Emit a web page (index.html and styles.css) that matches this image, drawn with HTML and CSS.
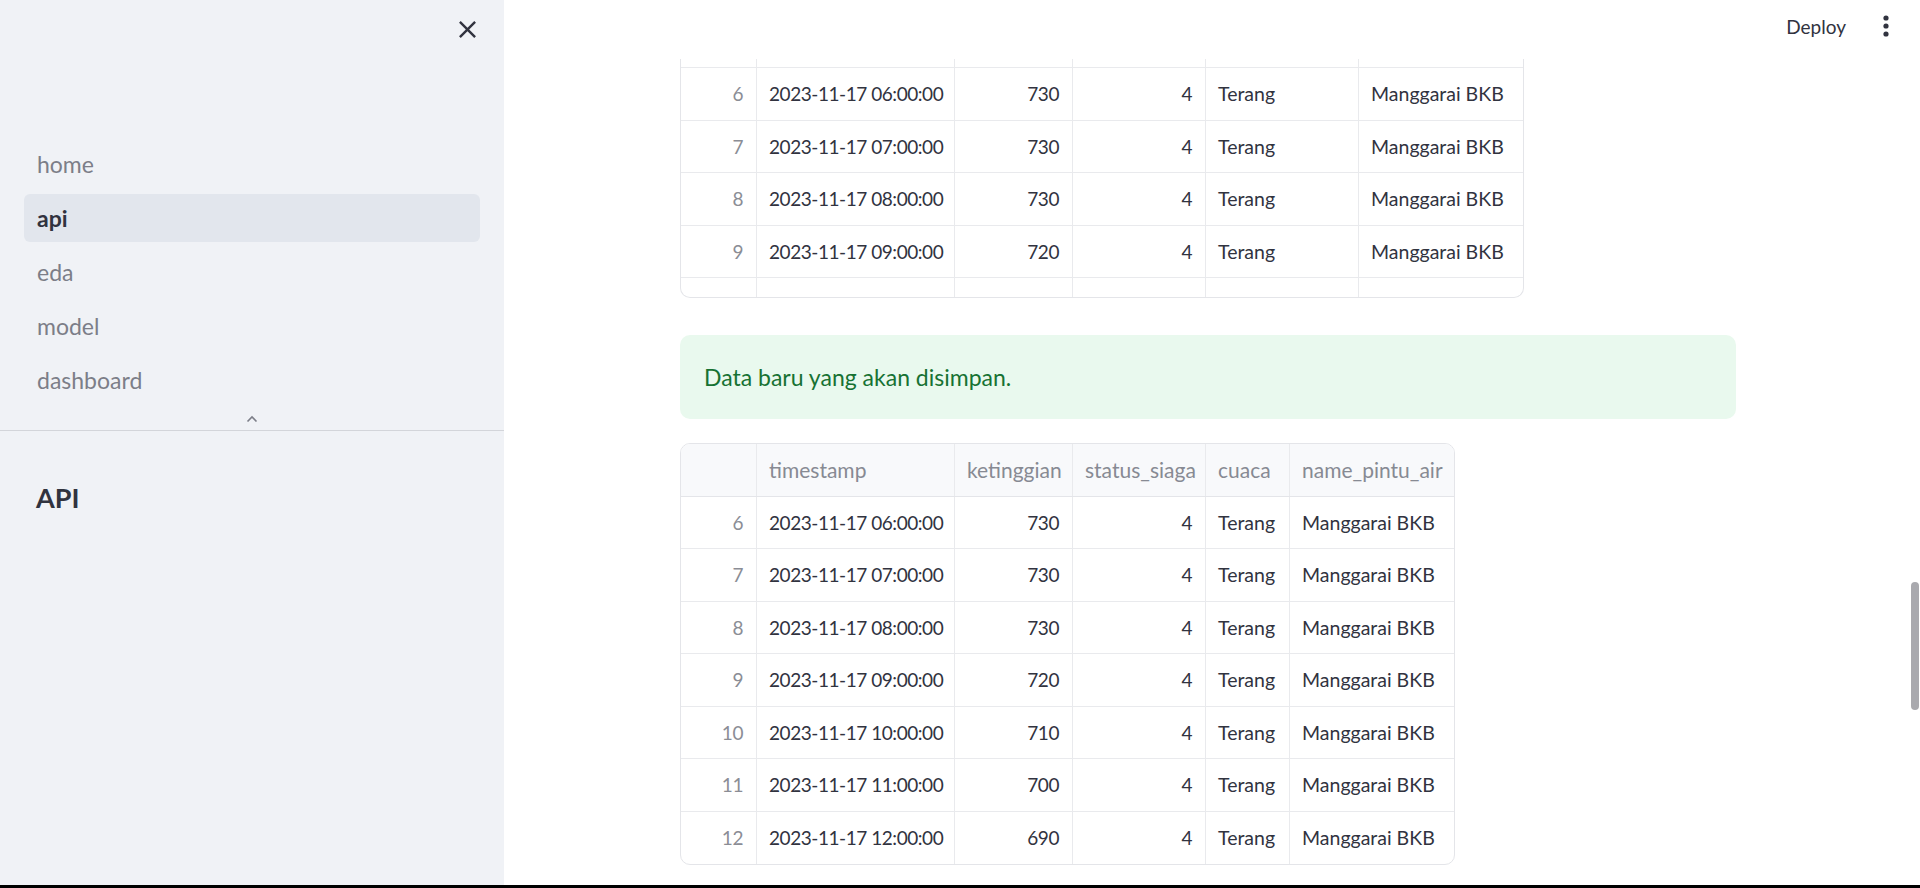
FILE: index.html
```html
<!DOCTYPE html>
<html lang="id">
<head>
<meta charset="utf-8">
<title>api</title>
<link rel="stylesheet" href="styles.css">
</head>
<body>
<div class="app">
  <aside class="sidebar">
    <div class="sb-header">
      <button class="icon-btn" aria-label="Close sidebar">
        <svg width="29" height="29" viewBox="0 0 24 24"><path d="M19 6.41L17.59 5 12 10.59 6.41 5 5 6.41 10.59 12 5 17.59 6.41 19 12 13.41 17.59 19 19 17.59 13.41 12z" fill="#31333f"/></svg>
      </button>
    </div>
    <nav class="nav">
      <a class="nav-item">home</a>
      <a class="nav-item active">api</a>
      <a class="nav-item">eda</a>
      <a class="nav-item">model</a>
      <a class="nav-item">dashboard</a>
    </nav>
    <div class="nav-toggle">
      <svg width="12" height="8" viewBox="0 0 12 8"><polyline points="1.5,6.5 6,2 10.5,6.5" fill="none" stroke="#7c7e88" stroke-width="1.6"/></svg>
    </div>
    <div class="sb-content">
      <h2 class="sb-title">API</h2>
    </div>
  </aside>

  <main class="main">
    <header class="topbar">
      <span class="deploy">Deploy</span>
      <span class="kebab">
        <svg width="6" height="22" viewBox="0 0 6 22"><circle cx="3" cy="3" r="2.6" fill="#31333f"/><circle cx="3" cy="11" r="2.6" fill="#31333f"/><circle cx="3" cy="19" r="2.6" fill="#31333f"/></svg>
      </span>
    </header>

    <section class="block">
      <div class="df df-scrolled t1">
        <div class="df-inner">
          <div class="row"><div class="c idx"></div><div class="c ts"></div><div class="c num"></div><div class="c num"></div><div class="c"></div><div class="c"></div></div>
          <div class="row"><div class="c idx">6</div><div class="c ts">2023-11-17 06:00:00</div><div class="c num">730</div><div class="c num">4</div><div class="c">Terang</div><div class="c">Manggarai BKB</div></div>
          <div class="row"><div class="c idx">7</div><div class="c ts">2023-11-17 07:00:00</div><div class="c num">730</div><div class="c num">4</div><div class="c">Terang</div><div class="c">Manggarai BKB</div></div>
          <div class="row"><div class="c idx">8</div><div class="c ts">2023-11-17 08:00:00</div><div class="c num">730</div><div class="c num">4</div><div class="c">Terang</div><div class="c">Manggarai BKB</div></div>
          <div class="row"><div class="c idx">9</div><div class="c ts">2023-11-17 09:00:00</div><div class="c num">720</div><div class="c num">4</div><div class="c">Terang</div><div class="c">Manggarai BKB</div></div>
          <div class="row"><div class="c idx">10</div><div class="c ts">2023-11-17 10:00:00</div><div class="c num">710</div><div class="c num">4</div><div class="c">Terang</div><div class="c">Manggarai BKB</div></div>
        </div>
      </div>

      <div class="alert">Data baru yang akan disimpan.</div>

      <div class="df df-full t2">
        <div class="row head"><div class="c"></div><div class="c">timestamp</div><div class="c">ketinggian</div><div class="c">status_siaga</div><div class="c">cuaca</div><div class="c">name_pintu_air</div></div>
        <div class="row"><div class="c idx">6</div><div class="c ts">2023-11-17 06:00:00</div><div class="c num">730</div><div class="c num">4</div><div class="c">Terang</div><div class="c">Manggarai BKB</div></div>
        <div class="row"><div class="c idx">7</div><div class="c ts">2023-11-17 07:00:00</div><div class="c num">730</div><div class="c num">4</div><div class="c">Terang</div><div class="c">Manggarai BKB</div></div>
        <div class="row"><div class="c idx">8</div><div class="c ts">2023-11-17 08:00:00</div><div class="c num">730</div><div class="c num">4</div><div class="c">Terang</div><div class="c">Manggarai BKB</div></div>
        <div class="row"><div class="c idx">9</div><div class="c ts">2023-11-17 09:00:00</div><div class="c num">720</div><div class="c num">4</div><div class="c">Terang</div><div class="c">Manggarai BKB</div></div>
        <div class="row"><div class="c idx">10</div><div class="c ts">2023-11-17 10:00:00</div><div class="c num">710</div><div class="c num">4</div><div class="c">Terang</div><div class="c">Manggarai BKB</div></div>
        <div class="row"><div class="c idx">11</div><div class="c ts">2023-11-17 11:00:00</div><div class="c num">700</div><div class="c num">4</div><div class="c">Terang</div><div class="c">Manggarai BKB</div></div>
        <div class="row last"><div class="c idx">12</div><div class="c ts">2023-11-17 12:00:00</div><div class="c num">690</div><div class="c num">4</div><div class="c">Terang</div><div class="c">Manggarai BKB</div></div>
      </div>
    </section>

    <div class="scroll-thumb"></div>
  </main>
</div>
<div class="taskbar"></div>
</body>
</html>
```

FILE: styles.css
```css
* { box-sizing: border-box; }

html, body {
  margin: 0;
  padding: 0;
  width: 1920px;
  height: 888px;
  overflow: hidden;
  background: #ffffff;
  font-family: Lato, "Noto Sans", sans-serif;
  color: #31333f;
}

.app {
  display: grid;
  grid-template-columns: 504px 1fr;
  height: 885px;
}

.taskbar {
  height: 3px;
  background: #000000;
}

/* ---------- Sidebar ---------- */
.sidebar {
  background: #f0f2f6;
  display: flex;
  flex-direction: column;
}

.sb-header {
  height: 58px;
  display: flex;
  justify-content: flex-end;
  align-items: center;
  padding-right: 22px;
}

.icon-btn {
  border: 0;
  background: transparent;
  padding: 0;
  display: flex;
  cursor: pointer;
}

.nav {
  margin-top: 82px;
  padding: 0 24px;
  display: flex;
  flex-direction: column;
  gap: 6px;
}

.nav-item {
  height: 48px;
  display: flex;
  align-items: center;
  padding-left: 13px;
  border-radius: 6px;
  font-size: 23px;
  color: #7c7e88;
}

.nav-item.active {
  background: #e2e6ed;
  color: #31333f;
  font-weight: 700;
}

.nav-toggle {
  height: 27px;
  display: flex;
  justify-content: center;
  align-items: flex-start;
  padding-top: 11px;
  border-bottom: 1px solid #d3d5da;
}

.sb-content {
  padding: 51px 36px 0;
}

.sb-title {
  margin: 0;
  font-size: 27px;
  line-height: 1.2;
  font-weight: 700;
  color: #31333f;
}

/* ---------- Main ---------- */
.main {
  position: relative;
  background: #ffffff;
  overflow: hidden;
}

.topbar {
  height: 59px;
  display: flex;
  justify-content: flex-end;
  align-items: center;
  gap: 37px;
  padding: 0 31px 7px 0;
}

.deploy {
  font-size: 19px;
  color: #31333f;
}

.kebab {
  display: flex;
}

.block {
  width: 1056px;
  margin-left: 176px;
  display: flex;
  flex-direction: column;
  align-items: flex-start;
}

/* ---------- Dataframes ---------- */
.df {
  border: 1px solid #e4e5e9;
  overflow: hidden;
  background: #ffffff;
}

.df-scrolled {
  width: 844px;
  height: 239px;
  border-top: 0;
  border-radius: 0 0 10px 10px;
}

.df-inner {
  margin-top: -43.5px;
}

.df-full {
  width: 775px;
  margin-top: 24px;
  border-radius: 10px;
}

.row {
  display: grid;
  height: 52.5px;
  border-bottom: 1px solid #e9eaed;
}

.row.last {
  border-bottom: 0;
}

.t1 .row { grid-template-columns: 76px 198px 118px 133px 153px 1fr; }
.t2 .row { grid-template-columns: 76px 198px 118px 133px 84px 1fr; }

.c {
  display: flex;
  align-items: center;
  padding: 0 12px;
  border-right: 1px solid #e9eaed;
  font-size: 19.5px;
  color: #31333f;
  white-space: nowrap;
  overflow: hidden;
}

.c:last-child { border-right: 0; }

.c.ts,
.c.num,
.c.idx {
  font-size: 19px;
  letter-spacing: -0.45px;
}

.c.num,
.c.idx {
  justify-content: flex-end;
  padding-right: 13px;
}

.c.idx { color: #8b8d95; }

.row.head {
  background: #f8f9fb;
  border-bottom: 1px solid #e4e5e9;
}

.row.head .c {
  color: #878a93;
  font-size: 21px;
}

/* ---------- Alert ---------- */
.alert {
  margin-top: 37px;
  width: 100%;
  height: 84px;
  display: flex;
  align-items: center;
  padding: 0 24px;
  background: #e9f9ee;
  color: #177233;
  border-radius: 10px;
  font-size: 23px;
}

/* ---------- Scrollbar overlay ---------- */
.scroll-thumb {
  position: absolute;
  right: 1px;
  top: 582px;
  width: 8px;
  height: 128px;
  border-radius: 4px;
  background: #a9a9ae;
}
```
